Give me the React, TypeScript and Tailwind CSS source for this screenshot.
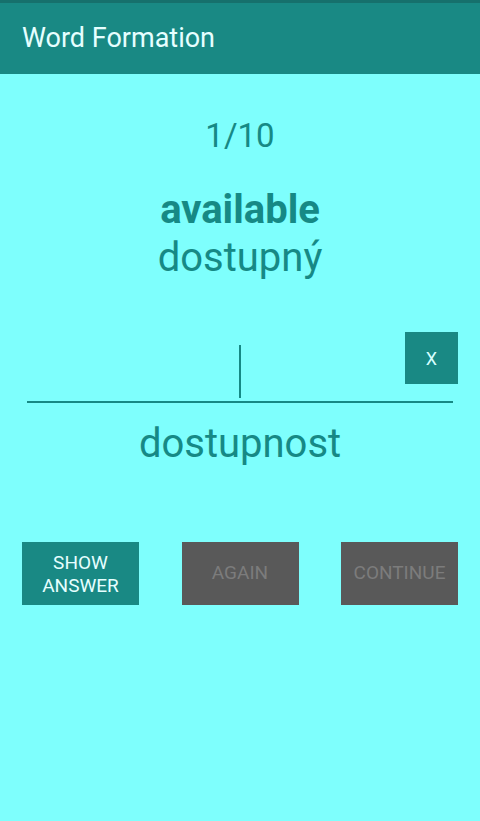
import React from "react";

export default function App() {
  return (
    <div className="w-[480px] h-[821px] bg-[#7efffd] flex flex-col" style={{ fontFamily: "Roboto, 'Noto Sans', sans-serif" }}>
      <div className="h-[74px] bg-[#198984] border-t-[3px] border-[#16706c] flex items-center pl-[22px]">
        <span className="text-[27px] text-[#e6ffff] leading-none">Word Formation</span>
      </div>
      <div className="flex flex-col items-center text-[#168985]">
        <div className="mt-[43px] h-[36px] flex items-center text-[33px] leading-none">1/10</div>
        <div className="mt-[37px] h-[40px] flex items-center text-[40px] font-bold leading-none">available</div>
        <div className="mt-[5px] h-[46px] flex items-center text-[40px] leading-none">dostupný</div>
      </div>
      <div className="relative mt-[51px] mx-[27px] h-[71px]">
        <div className="absolute left-[212px] top-[13px] w-[2px] h-[53px] bg-[#168985]" />
        <div className="absolute right-[-5px] top-0 w-[53px] h-[52px] bg-[#198984] flex items-center justify-center text-[#d6ffff] text-[18px]">X</div>
        <div className="absolute left-0 right-0 bottom-0 h-[2px] bg-[#168985]" />
      </div>
      <div className="flex justify-center mt-[20px] h-[42px] items-center text-[40px] text-[#168985] leading-none">dostupnost</div>
      <div className="mt-[77px] flex justify-between px-[22px]">
        <div className="w-[117px] h-[63px] bg-[#198984] text-[#e6ffff] text-[19px] leading-[23px] flex flex-col items-center justify-center text-center">
          <span>SHOW</span>
          <span>ANSWER</span>
        </div>
        <div className="w-[117px] h-[63px] bg-[#595959] text-[#7c7c7c] text-[19px] flex items-center justify-center">AGAIN</div>
        <div className="w-[117px] h-[63px] bg-[#595959] text-[#7c7c7c] text-[19px] flex items-center justify-center">CONTINUE</div>
      </div>
    </div>
  );
}
